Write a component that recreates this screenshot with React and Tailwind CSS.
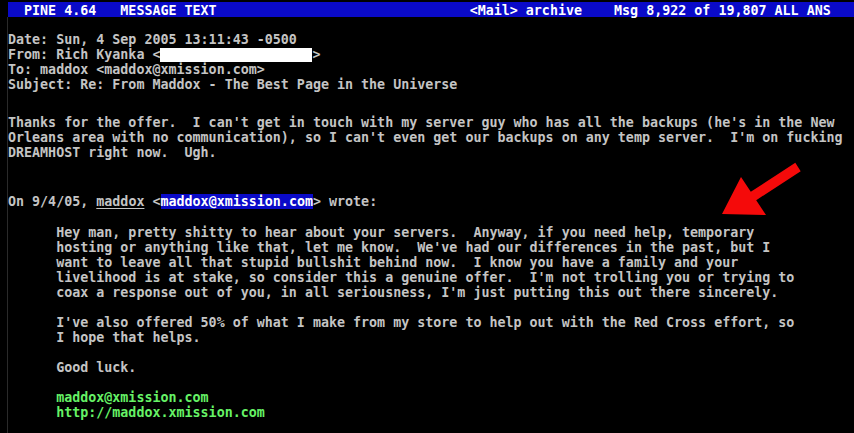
import React from "react";

const L = ({ children, className = "" }) => (
  <div className={"h-[15px] leading-[15px] whitespace-pre " + className}>{children}</div>
);

export default function App() {
  const hey = [
    "      Hey man, pretty shitty to hear about your servers.  Anyway, if you need help, temporary",
    "      hosting or anything like that, let me know.  We've had our differences in the past, but I",
    "      want to leave all that stupid bullshit behind now.  I know you have a family and your",
    "      livelihood is at stake, so consider this a genuine offer.  I'm not trolling you or trying to",
    "      coax a response out of you, in all seriousness, I'm just putting this out there sincerely.",
  ];
  return (
    <div className="relative w-[854px] h-[433px] overflow-hidden bg-black flex font-['DejaVu_Sans_Mono',monospace] font-bold text-[13.33px] text-[#c4c4c4]">
      <div className="w-[8px] shrink-0 border-r border-[#2a2a2a] mt-[17px]" />
      <div className="flex-1 flex flex-col">
        <div className="mt-[2px] h-[15px] box-border pt-px leading-[15px] bg-[#0a0ac8] text-white whitespace-pre flex">
          <span>{"  PINE 4.64   MESSAGE TEXT"}</span>
          <span className="ml-[253px]">{"<Mail> archive    Msg 8,922 of 19,807 ALL ANS"}</span>
        </div>
        <L />
        <L>Date: Sun, 4 Sep 2005 13:11:43 -0500</L>
        <L>
          {"From: Rich Kyanka <"}
          <span className="inline-block align-top w-[152px] h-[14px] mt-px bg-white" />
          {">"}
        </L>
        <L>To: maddox &lt;maddox@xmission.com&gt;</L>
        <L>Subject: Re: From Maddox - The Best Page in the Universe</L>

        <div className="mt-[23px]">
          <L>Thanks for the offer.  I can't get in touch with my server guy who has all the backups (he's in the New</L>
          <L>Orleans area with no communication), so I can't even get our backups on any temp server.  I'm on fucking</L>
          <L>DREAMHOST right now.  Ugh.</L>
        </div>

        <div className="mt-[34px]">
          <L>
            {"On 9/4/05, "}
            <span className="underline underline-offset-[2px] decoration-1">maddox</span>
            {" <"}
            <span className="inline-block h-[15px] leading-[15px] bg-[#0a0ac8] text-white">maddox@xmission.com</span>
            {"> wrote:"}
          </L>
        </div>

        <div className="mt-[16px]">
          {hey.map((t, i) => (
            <L key={i}>{t}</L>
          ))}
          <L />
          <L>{"      I've also offered 50% of what I make from my store to help out with the Red Cross effort, so"}</L>
          <L>{"      I hope that helps."}</L>
          <L />
          <L>{"      Good luck."}</L>
          <L />
          <L className="text-[#66f266]">{"      maddox@xmission.com"}</L>
          <L className="text-[#66f266]">{"      http://maddox.xmission.com"}</L>
        </div>
      </div>

      <svg className="absolute left-0 top-0 pointer-events-none" width="854" height="433" viewBox="0 0 854 433">
        <polygon
          points="722,214 741,177 750.8,191.8 795.3,162.8 800.7,171.2 756.2,200.2 766,215"
          fill="#f50a0a"
        />
      </svg>
    </div>
  );
}
